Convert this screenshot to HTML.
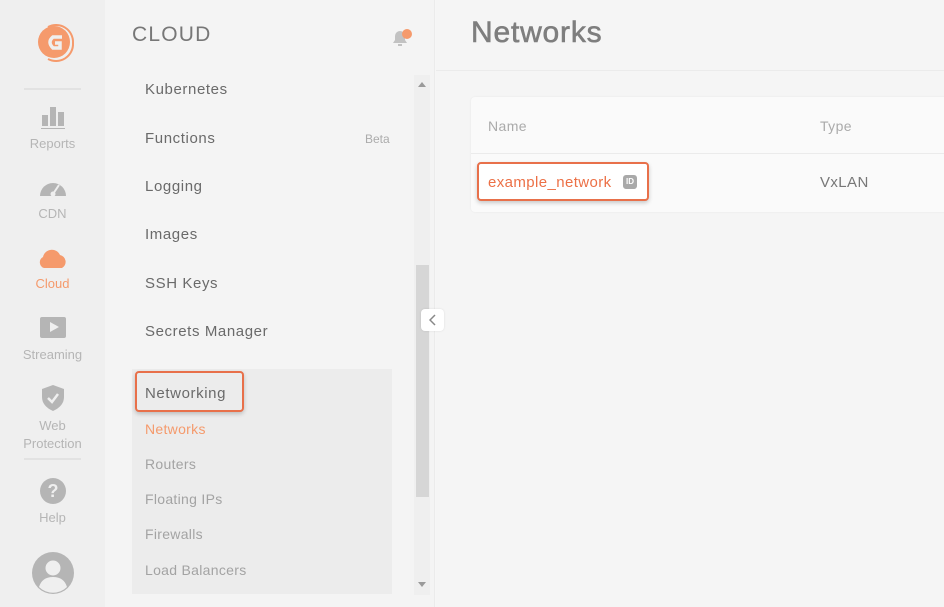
<!DOCTYPE html>
<html><head><meta charset="utf-8"><style>
*{box-sizing:border-box;margin:0;padding:0}
body{width:944px;height:607px;overflow:hidden;font-family:"Liberation Sans",sans-serif;background:#f6f6f6;position:relative}
.rail{position:absolute;left:0;top:0;width:105px;height:607px;background:#efefef}
.ri{position:absolute;left:0;width:105px;text-align:center;color:#b5b5b5;font-size:13px}
.sep{position:absolute;left:24px;width:57px;height:2px;background:#e2e2e2}
.menu{position:absolute;left:105px;top:0;width:330px;height:607px;background:#f4f4f4;border-right:1px solid #ebebeb;z-index:2}
.mi{position:absolute;left:40px;font-size:15px;color:#6a6a6a;letter-spacing:.6px}
.si{position:absolute;left:40px;font-size:14px;color:#a3a3a3;letter-spacing:.3px}
.main{position:absolute;left:436px;top:0;right:0;height:607px;background:#f5f5f5}
</style></head><body>
<div class="rail">
 <svg style="position:absolute;left:36px;top:23px" width="40" height="40" viewBox="0 0 40 40"><circle cx="18" cy="19" r="16" fill="#f59a6c"/><path d="M12 4 A17 17 0 0 1 37 20 A17 17 0 0 1 12 36" fill="none" stroke="#f59a6c" stroke-width="2"/><path d="M26 14 L17 14 Q11 19 17 25 L24 25 L24 20 L19 20" fill="none" stroke="#efefef" stroke-width="3.5"/></svg>
 <div class="sep" style="top:88px"></div>
 <svg style="position:absolute;left:41px;top:105px" width="24" height="24"><rect x="1" y="10" width="6" height="11" fill="#b5b5b5"/><rect x="9" y="2" width="6" height="19" fill="#b5b5b5"/><rect x="17" y="7" width="6" height="14" fill="#b5b5b5"/><rect x="0" y="23" width="24" height="1.5" fill="#b5b5b5"/></svg>
 <div class="ri" style="top:136px">Reports</div>
 <svg style="position:absolute;left:39px;top:176px" width="28" height="22"><path d="M1 20 A13 13 0 1 1 27 20 Z" fill="#b5b5b5"/><path d="M14 18 L20 9" stroke="#efefef" stroke-width="2"/><circle cx="14" cy="18" r="2.5" fill="#efefef"/></svg>
 <div class="ri" style="top:206px">CDN</div>
 <svg style="position:absolute;left:38px;top:247px" width="30" height="22"><path d="M6 21 A6 6 0 0 1 5 10 A9 9 0 0 1 22 8 A7 7 0 0 1 24 21 Z" fill="#f59a6c"/></svg>
 <div class="ri" style="top:276px;color:#f59a6c">Cloud</div>
 <div style="position:absolute;left:40px;top:317px;width:26px;height:21px;background:#b5b5b5;border-radius:2px"></div>
 <div style="position:absolute;left:50px;top:322px;width:0;height:0;border-left:9px solid #efefef;border-top:5.5px solid transparent;border-bottom:5.5px solid transparent"></div>
 <div class="ri" style="top:347px">Streaming</div>
 <svg style="position:absolute;left:41px;top:384px" width="24" height="28"><path d="M12 1 L23 5 L23 13 Q23 22 12 27 Q1 22 1 13 L1 5 Z" fill="#b5b5b5"/><path d="M7 14 L11 18 L17 10" fill="none" stroke="#efefef" stroke-width="2.5"/></svg>
 <div class="ri" style="top:417px;line-height:18px">Web<br>Protection</div>
 <div class="sep" style="top:458px"></div>
 <div style="position:absolute;left:40px;top:478px;width:26px;height:26px;border-radius:50%;background:#b5b5b5;color:#efefef;font-weight:bold;font-size:18px;text-align:center;line-height:26px">?</div>
 <div class="ri" style="top:510px">Help</div>
 <svg style="position:absolute;left:32px;top:552px" width="42" height="42" viewBox="0 0 42 42"><circle cx="21" cy="21" r="21" fill="#b5b5b5"/><circle cx="21" cy="16" r="7.5" fill="#efefef"/><path d="M7 35 Q10 25 21 25 Q32 25 35 35 A20 20 0 0 1 7 35Z" fill="#efefef"/></svg>
</div>
<div class="menu">
 <div style="position:absolute;left:27px;top:23px;font-size:21px;color:#777;letter-spacing:1.2px">CLOUD</div>
 <svg style="position:absolute;left:285px;top:27px" width="26" height="22"><path d="M3 16 L5 13 L5 9 A5 5 0 0 1 15 9 L15 13 L17 16 Z" fill="#c2c2c2"/><rect x="8" y="17" width="4" height="2" fill="#c2c2c2"/><circle cx="17" cy="7" r="5" fill="#f59a6c"/></svg>
 <div class="mi" style="top:81px">Kubernetes</div>
 <div class="mi" style="top:130px">Functions</div>
 <div style="position:absolute;left:260px;top:132px;font-size:12px;color:#ababab">Beta</div>
 <div class="mi" style="top:178px">Logging</div>
 <div class="mi" style="top:226px">Images</div>
 <div class="mi" style="top:275px">SSH Keys</div>
 <div class="mi" style="top:323px">Secrets Manager</div>
 <div style="position:absolute;left:27px;top:369px;width:260px;height:225px;background:#ececec"></div>
 <div style="position:absolute;left:30px;top:371px;width:109px;height:41px;border:2px solid #e8704a;border-radius:4px;background:#ececec;box-shadow:0 2px 4px rgba(0,0,0,.2)"></div>
 <div class="mi" style="top:385px">Networking</div>
 <div class="si" style="top:421px;color:#f59a6c">Networks</div>
 <div class="si" style="top:456px">Routers</div>
 <div class="si" style="top:491px">Floating IPs</div>
 <div class="si" style="top:526px">Firewalls</div>
 <div class="si" style="top:562px">Load Balancers</div>
 <div style="position:absolute;left:309px;top:75px;width:16px;height:520px;background:#efefef"></div>
 <div style="position:absolute;left:311px;top:265px;width:13px;height:232px;background:#d6d6d6"></div>
 <div style="position:absolute;left:313px;top:82px;border-bottom:5px solid #9a9a9a;border-left:4px solid transparent;border-right:4px solid transparent"></div>
 <div style="position:absolute;left:313px;top:582px;border-top:5px solid #9a9a9a;border-left:4px solid transparent;border-right:4px solid transparent"></div>
 <div style="position:absolute;left:316px;top:309px;width:23px;height:22px;background:#fff;border-radius:4px;box-shadow:0 0 2px rgba(0,0,0,.1)"></div>
 <svg style="position:absolute;left:324px;top:314px" width="8" height="12"><path d="M6 1 L1 6 L6 11" fill="none" stroke="#888" stroke-width="1.5"/></svg>
</div>
<div class="main">
 <div style="position:absolute;left:35px;top:16px;font-size:30px;color:#7e7e7e;letter-spacing:.8px;-webkit-text-stroke:.6px #7e7e7e">Networks</div>
 <div style="position:absolute;left:0;right:0;top:70px;height:1px;background:#ebebeb"></div>
 <div style="position:absolute;left:35px;top:97px;width:480px;height:115px;background:#fafafa;border-radius:4px;box-shadow:0 0 2px rgba(0,0,0,.06)">
  <div style="position:absolute;left:17px;top:21px;font-size:14px;color:#aaa;letter-spacing:.4px">Name</div>
  <div style="position:absolute;left:349px;top:21px;font-size:14px;color:#aaa;letter-spacing:.4px">Type</div>
  <div style="position:absolute;left:0;right:0;top:56px;height:1px;background:#ebebeb"></div>
  <div style="position:absolute;left:6px;top:65px;width:172px;height:39px;border:2px solid #e8704a;border-radius:4px;background:#fff;box-shadow:0 2px 4px rgba(0,0,0,.2)"></div>
  <div style="position:absolute;left:17px;top:77px;font-size:15px;color:#ec7046;letter-spacing:.4px">example_network</div>
  <div style="position:absolute;left:152px;top:78px;width:14px;height:14px;background:#a9a9a9;border-radius:3px;color:#fff;font-size:8px;font-weight:bold;text-align:center;line-height:14px">ID</div>
  <div style="position:absolute;left:349px;top:77px;font-size:15px;color:#777;letter-spacing:.4px">VxLAN</div>
 </div>
</div>
</body></html>
